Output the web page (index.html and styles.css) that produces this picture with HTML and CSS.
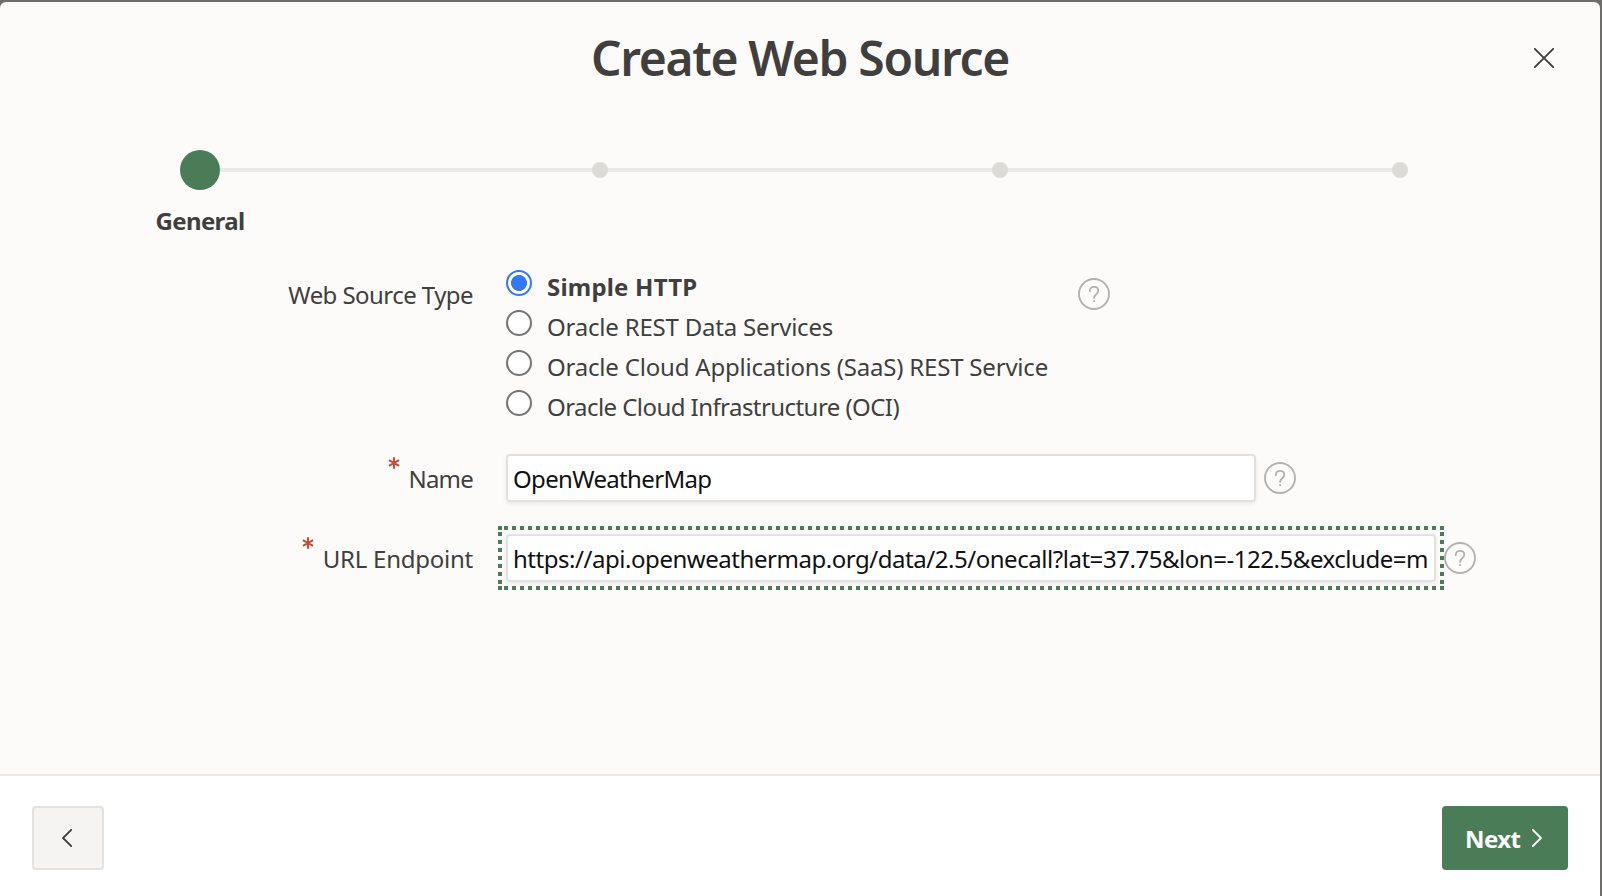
FILE: index.html
```html
<!DOCTYPE html>
<html lang="en">
<head>
<meta charset="utf-8">
<title>Create Web Source</title>
<link rel="stylesheet" href="styles.css">
</head>
<body>
<svg class="defs" width="0" height="0">
  <symbol id="help" viewBox="0 0 32 32">
    <circle cx="16" cy="16" r="15" fill="none" stroke="currentColor" stroke-width="1.9"/>
    <path d="M11.8 13.2C11.8 10.4 13.5 8.9 16.1 8.9C18.7 8.9 20.3 10.6 20.3 12.8C20.3 16.2 16.1 16.3 16.1 19.9" fill="none" stroke="currentColor" stroke-width="1.8" stroke-linecap="round"/>
    <circle cx="16.1" cy="23.1" r="1.1" fill="currentColor"/>
  </symbol>
  <symbol id="star" viewBox="0 0 12 12">
    <path d="M6 .3V11.7M.9 3.2L11.1 8.8M.9 8.8L11.1 3.2" fill="none" stroke="currentColor" stroke-width="2.1"/>
  </symbol>
</svg>
<main class="dialog">
  <header class="header">
    <h1 class="title">Create Web Source</h1>
    <button class="close" aria-label="Close"><svg width="20" height="20" viewBox="0 0 20 20"><path d="M.8.8L19.2 19.2M19.2.8L.8 19.2" fill="none" stroke="currentColor" stroke-width="1.9" stroke-linecap="round"/></svg></button>
  </header>
  <ol class="steps">
    <li class="step current"><span class="dot"></span><span class="step-name">General</span></li>
    <li class="step"><span class="dot"></span></li>
    <li class="step"><span class="dot"></span></li>
    <li class="step"><span class="dot"></span></li>
  </ol>
  <form class="form">
    <div class="row row-type">
      <span class="label type-label">Web Source Type</span>
      <div class="options">
        <label class="option checked"><span class="radio"></span><span class="text-http">Simple HTTP</span></label>
        <label class="option"><span class="radio"></span>Oracle REST Data Services</label>
        <label class="option"><span class="radio"></span><span class="text-saas">Oracle Cloud Applications (SaaS) REST Service</span></label>
        <label class="option"><span class="radio"></span><span class="text-oci">Oracle Cloud Infrastructure (OCI)</span></label>
      </div>
      <svg class="help"><use href="#help"/></svg>
    </div>
    <div class="row row-name">
      <span class="label"><svg class="star"><use href="#star"/></svg><span class="label-text label-name">Name</span></span>
      <div class="field field-name"><input class="input" type="text" value="OpenWeatherMap"></div>
      <svg class="help"><use href="#help"/></svg>
    </div>
    <div class="row row-url">
      <span class="label"><svg class="star"><use href="#star"/></svg><span class="label-text">URL Endpoint</span></span>
      <div class="field field-url"><input class="input" type="text" value="https://api.openweathermap.org/data/2.5/onecall?lat=37.75&amp;lon=-122.5&amp;exclude=m"></div>
      <svg class="help"><use href="#help"/></svg>
    </div>
  </form>
  <footer class="footer">
    <button class="btn back" aria-label="Back"><svg width="10" height="18" viewBox="0 0 10 18"><path d="M9.2.8L1 9L9.2 17.2" fill="none" stroke="currentColor" stroke-width="1.9" stroke-linecap="round"/></svg></button>
    <button class="btn next"><span class="next-text">Next</span><svg width="10" height="18" viewBox="0 0 10 18"><path d="M.8.8L9 9L.8 17.2" fill="none" stroke="currentColor" stroke-width="1.9" stroke-linecap="round"/></svg></button>
  </footer>
</main>
</body>
</html>
```
FILE: styles.css
```css
* { box-sizing: border-box; }
body {
  margin: 0;
  height: 896px;
  padding-top: 2px;
  overflow: hidden;
  background: #6f6d6b;
  color: #403f3d;
  font: 24px/40px "Noto Sans", sans-serif;
}
button { border: 0; padding: 0; background: none; color: inherit; font: inherit; }
svg { display: block; flex: none; }
.defs { position: absolute; }
.dialog {
  width: 1600px;
  height: 894px;
  display: flex;
  flex-direction: column;
  background: #fcfbf9;
  border-radius: 6px 6px 0 0;
  overflow: hidden;
}
.header {
  height: 112px;
  display: grid;
  grid-template-columns: 1fr auto 1fr;
  align-items: center;
}
.title {
  grid-column: 2;
  margin: 0;
  font-size: 48px;
  line-height: 56px;
  font-weight: 600;
  letter-spacing: -1.33px;
}
.close { justify-self: end; margin-right: 46px; }

.steps {
  margin: 34px 0 0;
  padding: 0;
  list-style: none;
  height: 119px;
  display: grid;
  grid-template-columns: repeat(4, 400px);
  background: linear-gradient(#e9e8e6, #e9e8e6) 200px 20px / 1200px 4px no-repeat;
}
.step { display: flex; flex-direction: column; align-items: center; padding-top: 14px; }
.dot { width: 16px; height: 16px; border-radius: 50%; background: #dcdbd8; }
.current { padding-top: 2px; }
.current .dot { width: 40px; height: 40px; background: #4a7d57; }
.step-name { margin-top: 11px; font-weight: 700; letter-spacing: -.65px; }

.form { flex: 1; }
.row { display: flex; }
.label {
  width: 473px;
  margin-right: 33px;
  display: flex;
  justify-content: flex-end;
  gap: 9px;
  line-height: 48px;
  letter-spacing: -.25px;
}
.type-label { padding-top: 4px; letter-spacing: -.56px; }
.label-text { height: 48px; padding-top: 1px; }
.label-name { letter-spacing: -.8px; }
.star { width: 12px; height: 12px; margin-top: 3px; color: #c0503d; }
.help { width: 32px; height: 32px; margin: 8px 0 0 7.5px; color: #b3b2b0; }
.options { letter-spacing: -.2px; }
.option { display: flex; gap: 15px; }
.option > .radio { margin-top: 3px; }
.radio {
  width: 26px;
  height: 26px;
  border: 2px solid #757575;
  border-radius: 50%;
  background: #fff;
  flex: none;
}
.checked { font-weight: 700; }
.checked .radio { border-color: #3478f6; background: radial-gradient(circle, #3478f6 7.6px, #fff 8.3px); }
.text-http { letter-spacing: .2px; }
.text-saas { letter-spacing: -.2px; }
.text-oci { letter-spacing: -.56px; }
.row-type .help { margin: 11px 0 0 30px; }
.row-name { height: 48px; margin-top: 27px; }
.row-url { height: 48px; margin-top: 32px; }

.field { position: relative; height: 48px; }
.field-name { width: 750px; }
.field-url { width: 930px; }
.input {
  display: block;
  width: 100%;
  height: 48px;
  padding: 0 5px;
  border: 2px solid #e3e1de;
  border-radius: 4px;
  background: #fff;
  box-shadow: 0 2px 4px rgba(0, 0, 0, .07);
  color: #111;
  font: inherit;
  letter-spacing: -.66px;
  outline: 0;
}
.field-url .input { letter-spacing: -.46px; }
/* dotted focus ring: four runs of 4px squares, closed by the corners */
.field-url::before {
  content: "";
  position: absolute;
  inset: -8px;
  pointer-events: none;
  --c: #4a7d57;
  --h: repeating-linear-gradient(90deg, var(--c) 0 4px, transparent 4px 8px);
  --v: repeating-linear-gradient(var(--c) 0 4px, transparent 4px 8px);
  --s: linear-gradient(var(--c), var(--c));
  background:
    var(--h) 6px 0 / 940px 4px no-repeat,
    var(--h) 6px 100% / 940px 4px no-repeat,
    var(--v) 0 6px / 4px 52px no-repeat,
    var(--v) 100% 6px / 4px 52px no-repeat,
    var(--s) 0 0 / 4px 4px no-repeat,
    var(--s) 100% 0 / 4px 4px no-repeat,
    var(--s) 0 100% / 4px 4px no-repeat,
    var(--s) 100% 100% / 4px 4px no-repeat;
}

.footer {
  height: 122px;
  padding: 30px 32px 0;
  display: flex;
  justify-content: space-between;
  border-top: 2px solid #e9e8e6;
  background: #fff;
}
.btn { height: 64px; display: flex; align-items: center; border-radius: 4px; }
.back { width: 72px; padding: 0 0 0 28px; background: #f5f4f2; border: 2px solid #e3e2df; }
.next {
  width: 126px;
  padding-left: 23px;
  gap: 12px;
  background: #4a7d57;
  color: #fff;
  font-weight: 700;
  letter-spacing: -.6px;
}
.next-text { padding-top: 2px; }
```
